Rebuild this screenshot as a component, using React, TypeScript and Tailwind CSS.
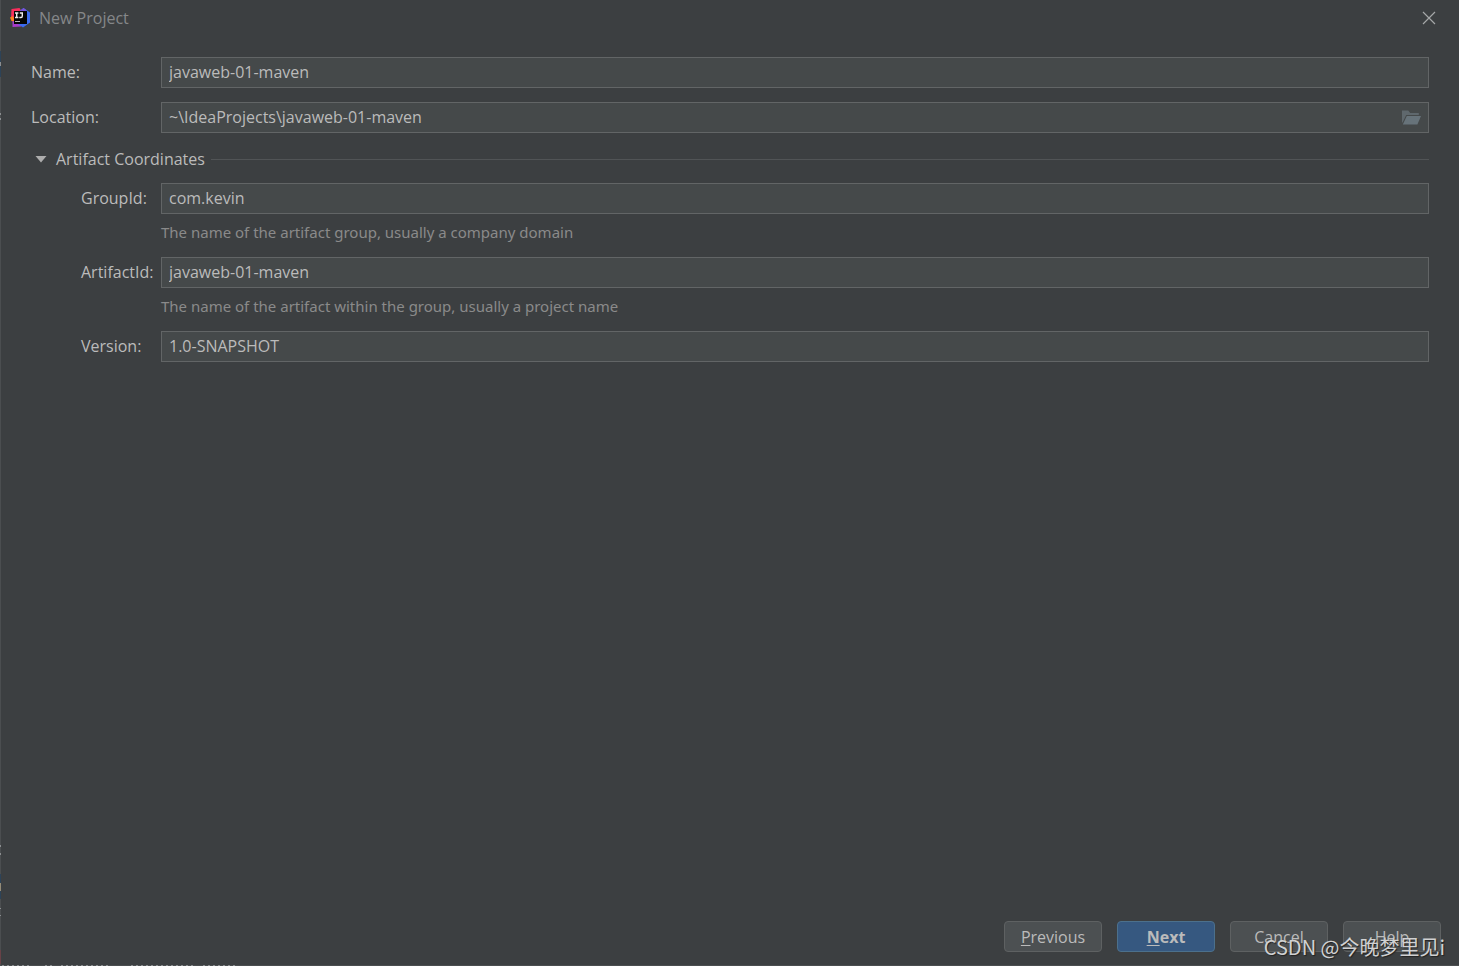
import { useState } from "react";

type FieldProps = {
  id: string;
  label: string;
  value: string;
  onChange: (value: string) => void;
  indent?: boolean;
  hint?: string;
  browse?: boolean;
};

function FolderIcon() {
  return (
    <svg width="19" height="15" viewBox="0 0 19 15" aria-hidden="true">
      <path d="M0 0.5h6.2l2 2.5h8.6v2H4.2L0.6 12.5H0z" fill="#5f686d" />
      <path d="M4.8 6H19l-3.6 8.5H0.8z" fill="#67737a" />
    </svg>
  );
}

function Field({ id, label, value, onChange, indent, hint, browse }: FieldProps) {
  return (
    <div className="flex items-start">
      <label
        htmlFor={id}
        className={`w-[130px] shrink-0 whitespace-nowrap leading-[31px] ${indent ? "pl-[50px]" : ""}`}
      >
        {label}
      </label>
      <div className="min-w-0 flex-1">
        <div className="flex h-[31px] items-center border border-[#626566] bg-[#45494a]">
          <input
            id={id}
            type="text"
            value={value}
            onChange={(e) => onChange(e.target.value)}
            aria-describedby={hint ? `${id}-hint` : undefined}
            className="h-full min-w-0 flex-1 bg-transparent px-[7px] pb-[2px] outline-none"
          />
          {browse && (
            <button type="button" aria-label="Browse" className="mr-[7px]">
              <FolderIcon />
            </button>
          )}
        </div>
        {hint && (
          <p
            id={`${id}-hint`}
            className="pt-[7px] font-['Noto_Sans',sans-serif] text-[15px] leading-[22px] text-[#8a8a8a]"
          >
            {hint}
          </p>
        )}
      </div>
    </div>
  );
}

function Logo() {
  return (
    <svg width="20" height="20" viewBox="0 0 20 20" aria-hidden="true">
      <path d="M1.5 1 9.5 0 12 4 5 13 1 10z" fill="#fb2d5c" />
      <path d="M0 9.5 3 8l2 6-3.5-1z" fill="#fc801d" />
      <path d="M2.5 13l6 1 3 4.5-9 .5z" fill="#a83bc9" />
      <path d="M10 2.5 13.5 0 20 4.6v9.9L13 19.5 8 16z" fill="#3b6cf0" />
      <path d="M10.5 2.5 13.5 0 16 1.8v3H9z" fill="#7952d8" />
      <rect x="4" y="3" width="13" height="13" fill="#050505" />
      <path
        d="M5 5h3.4M6.7 5v4.6M5 9.5h3.4M9.8 5H13M12.3 5v3q0 1.5-1.3 1.5H9.3"
        fill="none"
        stroke="#eeeeee"
        strokeWidth="1.4"
      />
      <path d="M5 13.5h5" stroke="#b8b8b8" strokeWidth="1" />
    </svg>
  );
}

function EdgeMarks() {
  return (
    <>
      <svg className="absolute -left-px top-0" width="1" height="965" aria-hidden="true">
        <path d="M.5 51v26M.5 874v25" stroke="#2d4358" />
        <path d="M.5 62v4M.5 113v2M.5 118v2M.5 845v2M.5 853v2M.5 908v1M.5 915v1" stroke="#8b8e90" />
        <path d="M.5 883v8" stroke="#958c78" />
        <path d="M.5 950v14" stroke="#684247" />
      </svg>
      <svg className="absolute -bottom-px left-0" width="236" height="1" aria-hidden="true">
        <path
          d="M1 .5h28M44 .5h8M60 .5h48M130 .5h62M202 .5h32"
          stroke="#8b8e90"
          strokeDasharray="2 3"
        />
      </svg>
    </>
  );
}

const buttonBase = "h-[31px] w-[98px] rounded-[4px] border";
const plainButton = "border-[#5e6162] bg-[#4c5052]";

export default function App() {
  const [name, setName] = useState("javaweb-01-maven");
  const [location, setLocation] = useState("~\\IdeaProjects\\javaweb-01-maven");
  const [groupId, setGroupId] = useState("com.kevin");
  const [artifactId, setArtifactId] = useState("javaweb-01-maven");
  const [version, setVersion] = useState("1.0-SNAPSHOT");
  const [open, setOpen] = useState(true);

  return (
    <div className="relative flex min-h-screen flex-col border-b border-l border-[#4b4e50] bg-[#3c3f41] font-['Open_Sans','Noto_Sans_CJK_SC',sans-serif] text-[16px] text-[#bbbbbb]">
      <header className="flex h-9 items-center pl-[9px] pr-[23px]">
        <Logo />
        <h1 className="ml-[9px] flex-1 text-[#858789]">New Project</h1>
        <button type="button" aria-label="Close">
          <svg width="14" height="14" viewBox="0 0 14 14" aria-hidden="true">
            <path d="M1 1l12 12M13 1L1 13" stroke="#a5a7a8" strokeWidth="1.2" />
          </svg>
        </button>
      </header>

      <main className="flex-1 pl-[30px] pr-[30px] pt-[21px]">
        <div className="flex flex-col gap-[14px]">
          <Field id="name" label="Name:" value={name} onChange={setName} />
          <Field id="location" label="Location:" value={location} onChange={setLocation} browse />
        </div>

        <div className="mt-[14px] flex items-center">
          <button
            type="button"
            aria-expanded={open}
            onClick={() => setOpen(!open)}
            className="flex items-center pl-[4px] leading-[24px]"
          >
            <svg width="12" height="8" viewBox="0 0 12 8" className="mr-[9px]" aria-hidden="true">
              <path d="M0.5 1h11L6 7.5z" fill="#adadad" />
            </svg>
            Artifact Coordinates
          </button>
          <span className="ml-[6px] h-px flex-1 bg-[#515456]" />
        </div>

        {open && (
          <div className="mt-[12px] flex flex-col gap-[14px]">
            <Field
              id="group-id"
              label="GroupId:"
              value={groupId}
              onChange={setGroupId}
              hint="The name of the artifact group, usually a company domain"
              indent
            />
            <Field
              id="artifact-id"
              label="ArtifactId:"
              value={artifactId}
              onChange={setArtifactId}
              hint="The name of the artifact within the group, usually a project name"
              indent
            />
            <Field id="version" label="Version:" value={version} onChange={setVersion} indent />
          </div>
        )}
      </main>

      <footer className="flex justify-end gap-[15px] pb-[13px] pr-[18px]">
        <button type="button" className={`${buttonBase} ${plainButton}`}>
          <span className="underline underline-offset-2">P</span>revious
        </button>
        <button type="button" className={`${buttonBase} border-[#4c708c] bg-[#365880] font-bold`}>
          <span className="underline underline-offset-2">N</span>ext
        </button>
        <button type="button" className={`${buttonBase} ${plainButton}`}>
          Cancel
        </button>
        <button type="button" className={`${buttonBase} ${plainButton}`}>
          Help
        </button>
      </footer>

      <EdgeMarks />
      <p className="pointer-events-none absolute bottom-[3px] right-[14px] whitespace-nowrap font-['Noto_Sans_CJK_SC',sans-serif] text-[20px] leading-[30px] text-[#d0d1d2] [text-shadow:1px_1px_1px_#222]">
        CSDN @今晚梦里见i
      </p>
    </div>
  );
}
